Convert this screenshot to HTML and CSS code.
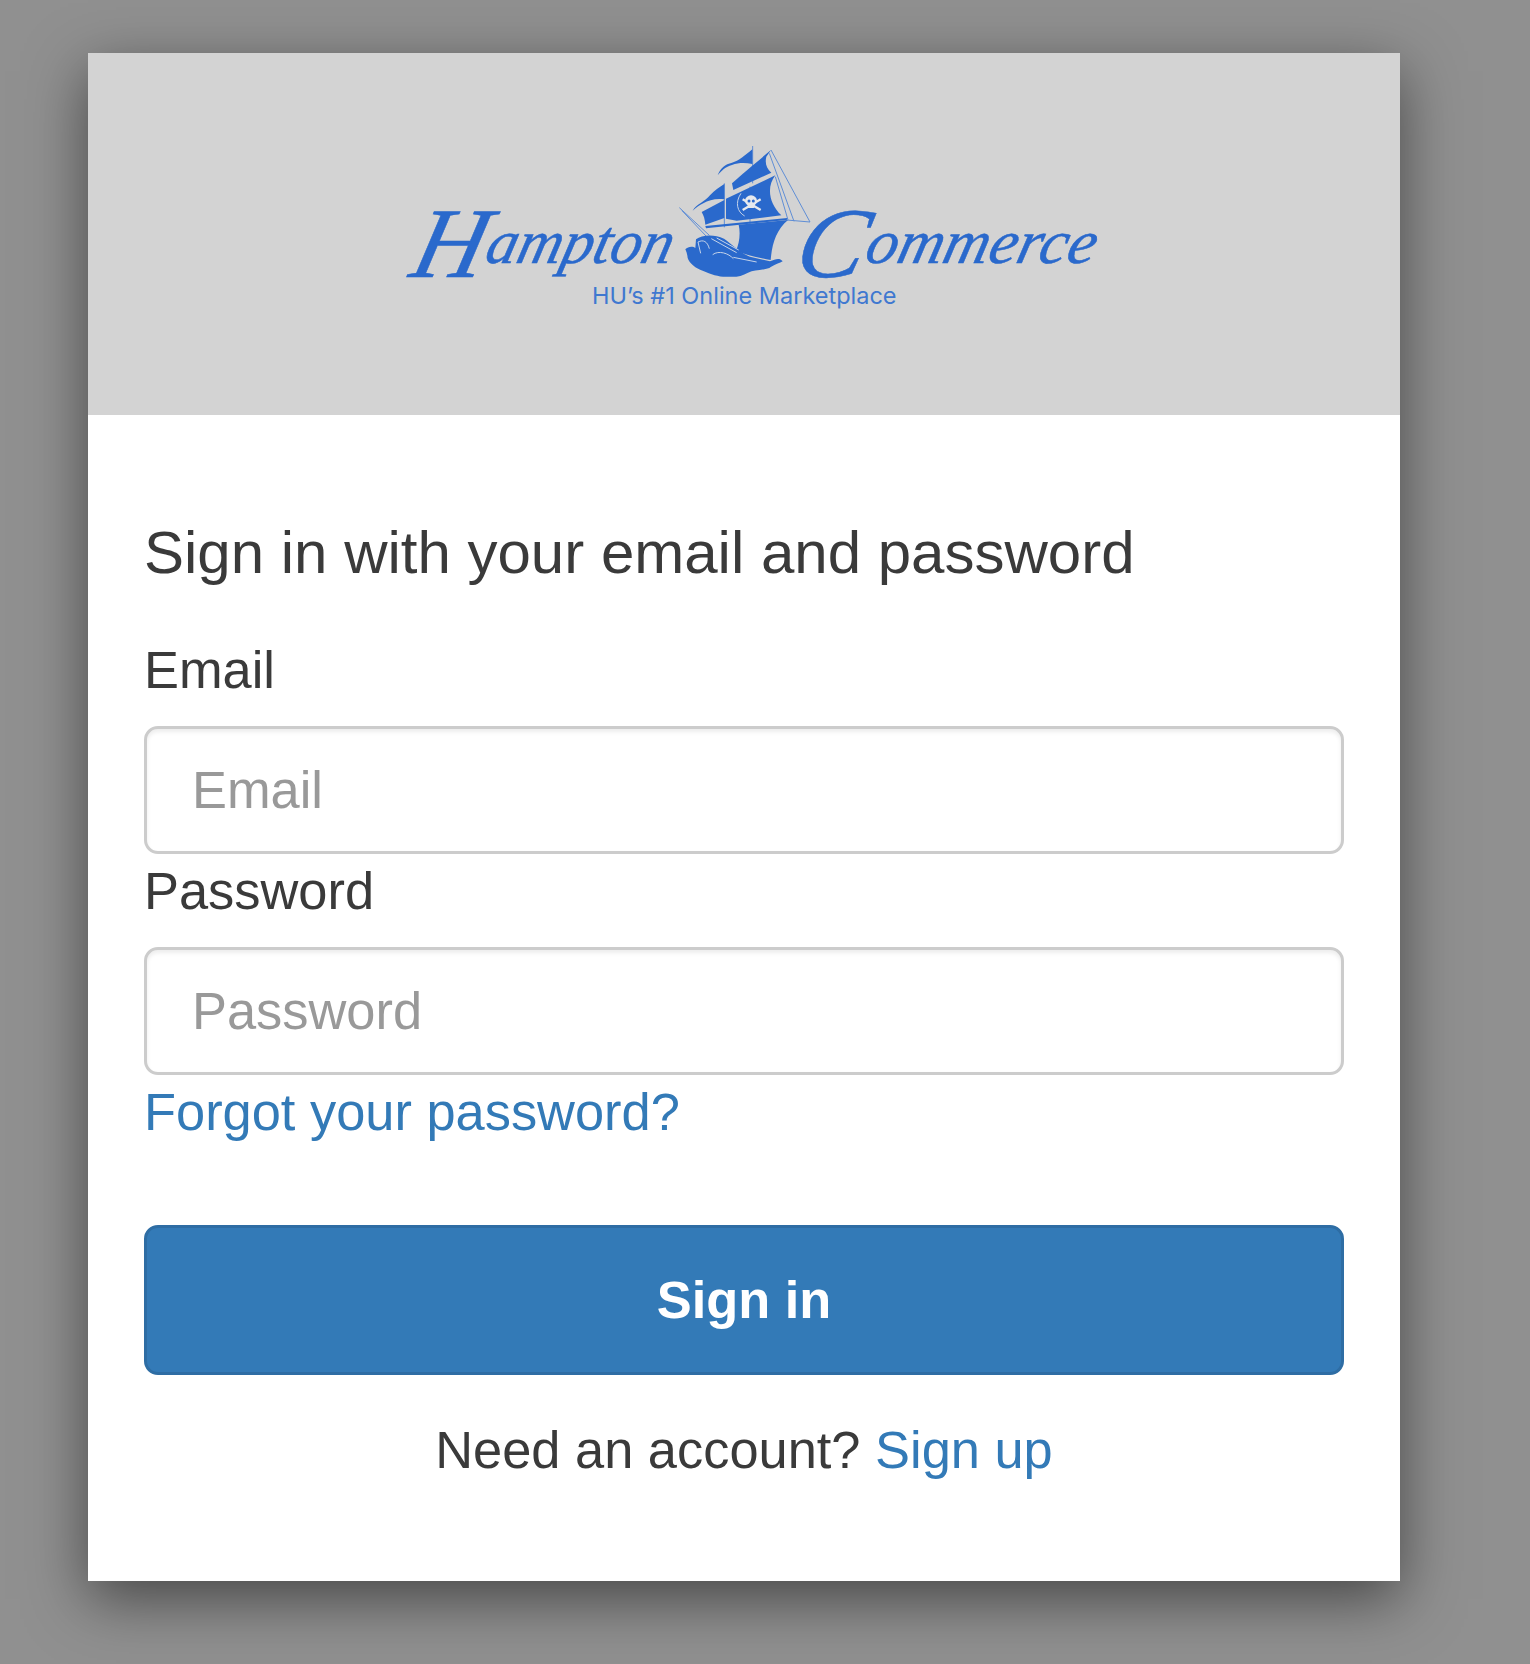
FILE: index.html
```html
<!DOCTYPE html>
<html lang="en">
<head>
<meta charset="utf-8">
<title>Sign in</title>
<link rel="stylesheet" href="styles.css">
</head>
<body>
<main class="card">
  <header class="banner">
    <div class="logo-row">
      <span class="script script-left">Hampton</span>
      <svg class="ship" viewBox="0 0 450 420" aria-hidden="true">
        <g class="rig">
          <path d="M303 30L420 246L350 240"/>
          <path d="M298 40L372 244"/>
          <path d="M316 110L354 240"/>
          <path d="M28 203L118 286"/>
          <path d="M36 212L110 290"/>
          <path d="M248 18V130"/>
          <path d="M163 130V262"/>
          <path d="M240 140V262"/>
        </g>
        <g class="ink">
          <path d="M143 106C150 86 166 72 186 68C206 64 226 45 247 28V72C226 68 205 68 186 75C166 81 155 91 143 106Z"/>
          <path d="M68 212C80 192 104 186 120 166C134 150 150 140 163 132V178C140 174 116 180 100 190C88 196 78 203 68 212Z"/>
          <path d="M186 130C216 102 270 58 303 30L289 50C284 70 290 86 304 98L190 150Z"/>
          <path d="M95 216L163 180V234L106 254C105 238 101 226 95 216Z"/>
          <path d="M168 176L316 106C288 142 298 192 334 226L200 242L168 236Z"/>
          <path d="M106 258L352 234L350 240L108 265Z"/>
          <path d="M206 254L354 240C318 270 306 312 302 360C272 354 236 348 198 332C208 310 212 280 206 254Z"/>
          <path d="M46 328C54 318 70 318 76 324L78 298C96 284 132 282 162 296C186 312 206 336 240 350L300 364C316 358 328 352 338 364C318 374 310 376 298 384C272 392 252 390 234 398C216 408 198 412 176 410C150 412 126 404 98 392C78 386 58 370 53 354C52 344 50 336 46 328Z"/>
        </g>
        <g class="light">
          <path d="M213 160C194 188 202 216 224 228"/>
          <path d="M84 306C100 298 112 304 118 326"/>
          <path d="M124 296L200 338"/>
          <path d="M140 294L206 330"/>
          <path d="M128 344C146 330 176 340 190 356"/>
          <path d="M190 352L260 366"/>
          <path d="M84 306L92 340"/>
        </g>
        <g class="skull">
          <ellipse cx="243" cy="182" rx="18" ry="16"/>
          <rect x="233" y="192" width="20" height="12" rx="2"/>
          <path class="bones" d="M218 178L272 210M272 178L218 210"/>
        </g>
        <circle class="eye" cx="237" cy="183" r="4.5"/>
        <circle class="eye" cx="250" cy="183" r="4.5"/>
      </svg>
      <span class="script script-right">Commerce</span>
    </div>
    <p class="tagline">HU’s #1 Online Marketplace</p>
  </header>
  <form class="panel">
    <h1 class="title">Sign in with your email and password</h1>
    <label class="label" for="email">Email</label>
    <input class="field" id="email" type="text" placeholder="Email">
    <label class="label" for="password">Password</label>
    <input class="field" id="password" type="password" placeholder="Password">
    <a class="link forgot" href="#">Forgot your password?</a>
    <button class="submit" type="button">Sign in</button>
    <p class="signup">Need an account? <a class="link" href="#">Sign up</a></p>
  </form>
</main>
</body>
</html>
```

FILE: styles.css
```css
* {
  box-sizing: border-box;
}

html,
body {
  margin: 0;
  background: #909090;
}

body {
  height: 1664px;
  padding: 53px 0 0 88px;
  overflow: hidden;
  font-family: "Liberation Sans", Arial, sans-serif;
  color: #3a3a3a;
}

.card {
  width: 1312px;
  background: #fff;
  box-shadow: 0 18px 56px rgba(0, 0, 0, 0.5);
}

.banner {
  display: flex;
  flex-direction: column;
  align-items: flex-start;
  height: 362px;
  padding: 87px 0 0 320px;
  background: #d3d3d3;
}

.logo-row {
  display: flex;
  align-items: flex-start;
  height: 140px;
}

.script {
  display: block;
  padding-top: 71px;
  font-family: "Liberation Serif", "Times New Roman", serif;
  font-size: 62px;
  font-style: italic;
  line-height: 62px;
  color: #2a69cc;
  white-space: nowrap;
  -webkit-text-stroke: 0.5px #2a69cc;
  transform-origin: 0 100%;
}

.script::first-letter {
  font-size: 100px;
  vertical-align: -14px;
}

.script-left {
  width: 262px;
  transform: skewX(-14deg) scaleX(1);
}

.script-right {
  margin-left: -28px;
  transform: skewX(-14deg) scaleX(1.02);
}

.ship {
  flex: none;
  width: 150px;
  height: 140px;
}

.ink {
  fill: #2a69cc;
}

.rig {
  fill: none;
  stroke: #5f8ed6;
  stroke-width: 3;
}

.light {
  fill: none;
  stroke: #c4d3ea;
  stroke-width: 3;
}

.skull {
  fill: #e6e9ee;
}

.bones {
  fill: none;
  stroke: #e6e9ee;
  stroke-width: 7;
}

.eye {
  fill: #2a69cc;
}

.tagline {
  margin: 0 0 0 184px;
  font-family: Inter, "Liberation Sans", sans-serif;
  font-size: 23.5px;
  line-height: 32px;
  color: #3f78d0;
  white-space: nowrap;
}

.panel {
  display: flex;
  flex-direction: column;
  align-items: stretch;
  padding: 105px 56px 94px;
}

.title {
  margin: 0 0 47px;
  font-size: 60px;
  font-weight: 400;
  line-height: 66px;
}

.label {
  margin-bottom: 19px;
  font-size: 52.4px;
  line-height: 74px;
}

.field {
  width: 100%;
  height: 128px;
  padding: 0 45px;
  border: 3px solid #ccc;
  border-radius: 14px;
  background: #fff;
  box-shadow: inset 0 3px 4px rgba(0, 0, 0, 0.075);
  font-family: inherit;
  font-size: 52.4px;
  color: #3a3a3a;
  outline: none;
}

.field::placeholder {
  color: #999;
  opacity: 1;
}

.link {
  color: #337ab7;
  text-decoration: none;
}

.forgot {
  font-size: 52.4px;
  line-height: 74px;
}

.submit {
  width: 100%;
  height: 150px;
  margin-top: 76px;
  border: 3px solid #2e6da4;
  border-radius: 14px;
  background: #337ab7;
  font-family: inherit;
  font-size: 52.4px;
  font-weight: 700;
  color: #fff;
}

.signup {
  margin: 38px 0 0;
  font-size: 52.4px;
  line-height: 74px;
  text-align: center;
}
```
